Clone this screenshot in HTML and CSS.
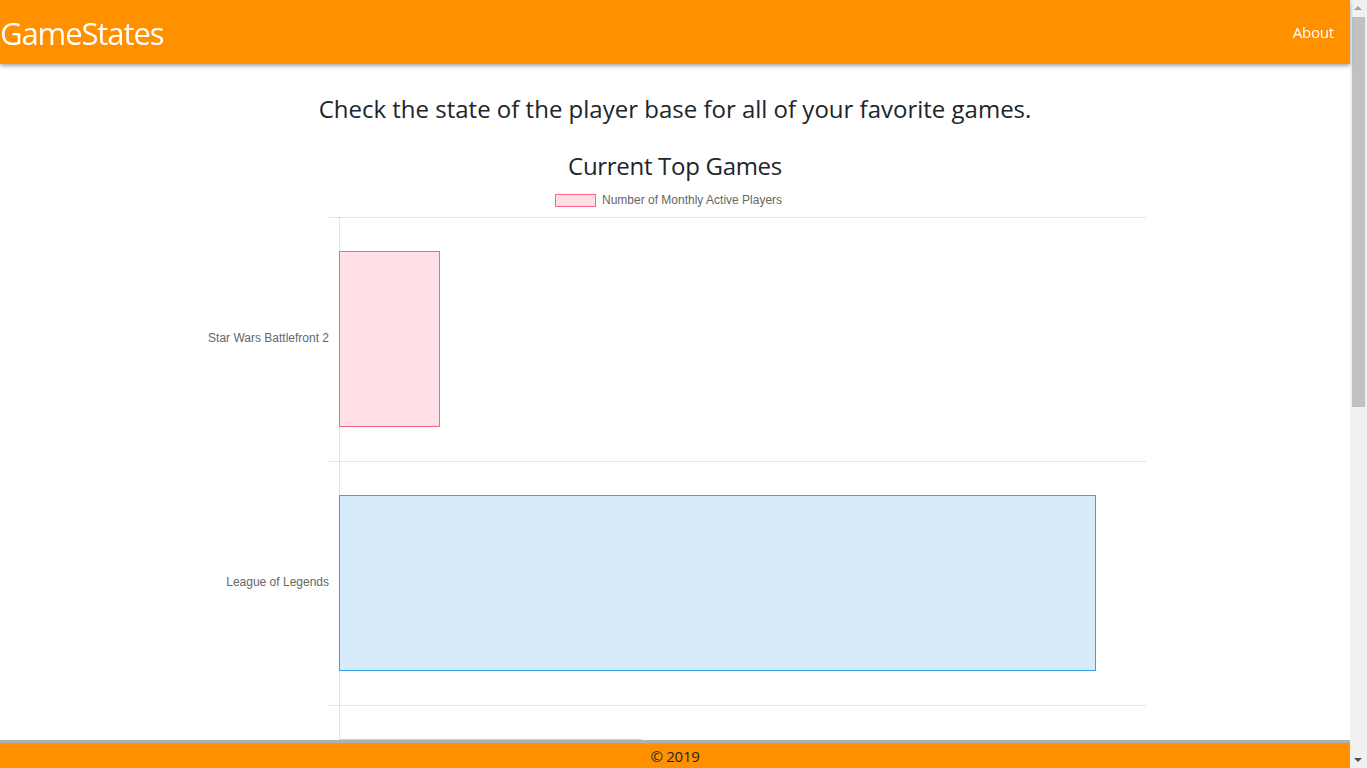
FILE: index.html
```html
<!DOCTYPE html>
<html lang="en">
<head>
<meta charset="utf-8">
<title>GameStates</title>
<link rel="stylesheet" href="styles.css">
</head>
<body>
<div class="page">
  <header class="topbar">
    <a class="brand" href="#">GameStates</a>
    <nav class="nav"><a class="nav-link" href="#">About</a></nav>
  </header>
  <main class="main">
    <h1 class="lead">Check the state of the player base for all of your favorite games.</h1>
    <h2 class="chart-title">Current Top Games</h2>
    <svg class="chart" width="942" height="583" viewBox="0 0 942 583" xmlns="http://www.w3.org/2000/svg">
      <g class="legend">
        <rect x="351.5" y="9.5" width="40" height="12" fill="rgba(255,99,132,0.2)" stroke="rgb(255,99,132)" stroke-width="1"/>
        <text x="398" y="19" class="tick">Number of Monthly Active Players</text>
      </g>
      <g class="grid" stroke="rgba(0,0,0,0.1)" stroke-width="1">
        <line x1="124" y1="32.5" x2="942" y2="32.5"/>
        <line x1="124" y1="276.5" x2="942" y2="276.5"/>
        <line x1="124" y1="520.5" x2="942" y2="520.5"/>
        <line x1="135.5" y1="32" x2="135.5" y2="583"/>
      </g>
      <g class="bars" stroke-width="1">
        <rect x="135.5" y="66.5" width="100" height="175" fill="rgba(255,99,132,0.2)" stroke="rgb(255,99,132)"/>
        <rect x="135.5" y="310.5" width="756" height="175" fill="rgba(54,162,235,0.2)" stroke="rgb(54,162,235)"/>
        <rect x="135.5" y="554.5" width="302" height="175" fill="rgba(255,206,86,0.2)" stroke="rgb(255,206,86)"/>
      </g>
      <g class="labels">
        <text x="125" y="156.5" text-anchor="end" class="tick">Star Wars Battlefront 2</text>
        <text x="125" y="400.5" text-anchor="end" class="tick">League of Legends</text>
      </g>
    </svg>
  </main>
  <footer class="footer">© 2019</footer>
</div>
<div class="scrollbar" aria-hidden="true">
  <div class="sb-arrow sb-up"></div>
  <div class="sb-track"><div class="sb-thumb"></div></div>
  <div class="sb-arrow sb-down"></div>
</div>
</body>
</html>
```
FILE: styles.css
```css
html, body {
  margin: 0;
  padding: 0;
  overflow: hidden;
}
body {
  font-family: "Open Sans", "Noto Sans", sans-serif;
  color: #212529;
  background: #fff;
}
.page {
  width: 1350px;
  height: 768px;
  display: flex;
  flex-direction: column;
}
.topbar {
  height: 64px;
  flex: none;
  background: #ff9100;
  box-shadow: 0 2px 4px rgba(0, 0, 0, 0.35);
  display: flex;
  align-items: center;
  justify-content: space-between;
  position: relative;
  z-index: 10;
}
.brand {
  color: #fff;
  text-decoration: none;
  font-size: 31px;
  line-height: 40px;
  letter-spacing: -1.1px;
  margin-top: 2px;
}
.nav {
  padding-right: 16px;
}
.nav-link {
  color: #fff;
  text-decoration: none;
  font-size: 15px;
  letter-spacing: -0.2px;
}
.main {
  flex: 1;
  min-height: 0;
  overflow: hidden;
  padding-top: 30px;
  display: flex;
  flex-direction: column;
  align-items: center;
}
.lead {
  margin: 0;
  font-size: 24px;
  font-weight: 400;
  line-height: 29px;
}
.chart-title {
  margin: 28px 0 0;
  font-size: 24px;
  font-weight: 400;
  line-height: 29px;
  letter-spacing: -0.3px;
}
.chart {
  display: block;
  flex: none;
  margin-top: 5px;
}
.tick {
  font-family: "Liberation Sans", Arial, sans-serif;
  font-size: 12px;
  fill: #666;
}
.footer {
  flex: none;
  height: 25px;
  border-top: 3px solid #b0b0b0;
  background: #ff9100;
  text-align: center;
  font-size: 15px;
  line-height: 26px;
  letter-spacing: -0.3px;
  color: #212529;
  position: relative;
  z-index: 10;
}
.scrollbar {
  position: fixed;
  top: 0;
  right: 0;
  width: 17px;
  height: 768px;
  background: #f1f1f1;
  display: flex;
  flex-direction: column;
}
.sb-arrow {
  height: 17px;
  flex: none;
  position: relative;
}
.sb-up::after,
.sb-down::after {
  content: "";
  position: absolute;
  left: 4px;
  width: 0;
  height: 0;
  border-left: 4px solid transparent;
  border-right: 4px solid transparent;
}
.sb-up::after {
  top: 6px;
  border-bottom: 4px solid #a3a3a3;
}
.sb-down::after {
  top: 7px;
  border-top: 4px solid #505050;
}
.sb-track {
  flex: 1;
  padding: 0 2px;
}
.sb-thumb {
  height: 390px;
  background: #c1c1c1;
}
```
